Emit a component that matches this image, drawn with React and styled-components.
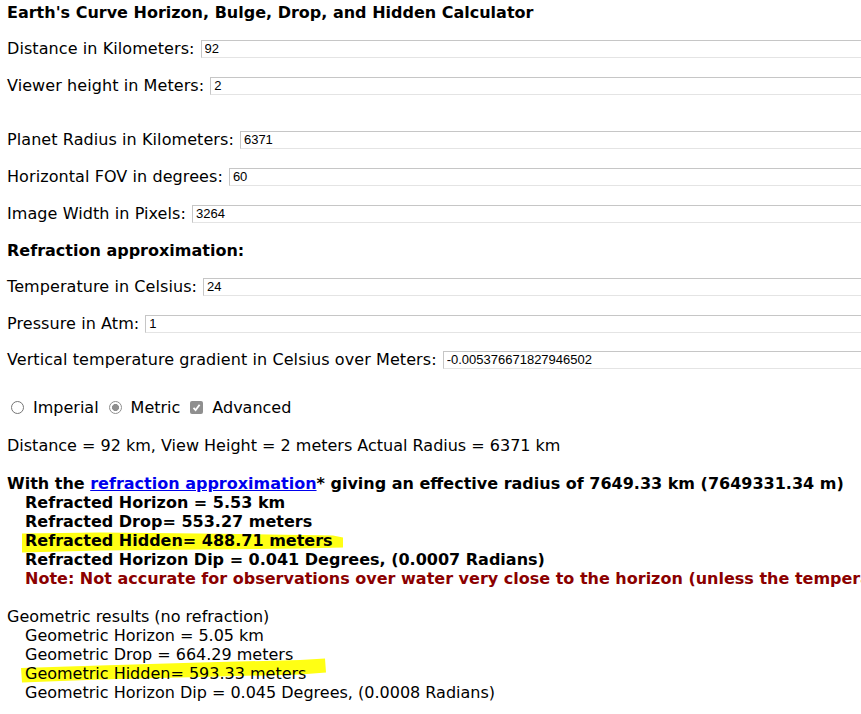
import styled, { createGlobalStyle } from 'styled-components';

const GlobalStyle = createGlobalStyle`
  html, body {
    margin: 0;
    padding: 0;
    background: #fff;
    overflow: hidden;
  }
  body {
    font-family: "DejaVu Sans", Verdana, sans-serif;
    font-size: 16px;
    color: #000;
  }
`;

const Page = styled.div`
  padding: 3px 0 0 7px;
  white-space: nowrap;
`;

const Title = styled.div`
  font-weight: bold;
  line-height: 20px;
`;

const Field = styled.div`
  display: flex;
  align-items: center;
  gap: 6px;
  height: 21px;
  margin-top: ${(props) => props.$gap}px;
  margin-right: -14px;
  letter-spacing: 0.08px;
`;

const Input = styled.input`
  flex: 1;
  min-width: 0;
  height: 18px;
  box-sizing: border-box;
  border: 1px solid;
  border-color: #c6c6c6 #e4e4e4 #e4e4e4 #c6c6c6;
  padding: 0 3px;
  font: 13px "Liberation Sans", Arial, sans-serif;
  letter-spacing: 0;
  color: #000;
  background: #fff;
  outline: none;
`;

const Heading = styled.div`
  font-weight: bold;
  line-height: 21px;
  margin-top: ${(props) => props.$gap}px;
`;

const Options = styled.div`
  display: flex;
  align-items: center;
  height: 21px;
  margin-top: 27px;
  padding-left: 4px;
`;

const Option = styled.label`
  display: flex;
  align-items: center;
  gap: 9px;
  margin-right: 10px;
`;

const Radio = styled.span`
  box-sizing: border-box;
  width: 13px;
  height: 13px;
  border-radius: 50%;
  border: 1px solid ${(props) => (props.$checked ? '#8f8f8f' : '#767676')};
  background: ${(props) =>
    props.$checked ? 'radial-gradient(circle, #8f8f8f 0 3.2px, #fff 3.8px)' : '#fff'};
`;

const Checkbox = styled.span`
  display: flex;
  align-items: center;
  justify-content: center;
  width: 13px;
  height: 13px;
  border-radius: 2px;
  background: #8f8f8f;
`;

const Text = styled.div`
  line-height: ${(props) => props.$lh || 19}px;
  margin-top: ${(props) => props.$gap || 0}px;
  padding-left: ${(props) => (props.$indent ? 18 : 0)}px;
  font-weight: ${(props) => (props.$bold ? 'bold' : 'normal')};
  color: ${(props) => props.$color || '#000'};
  position: relative;
`;

const Link = styled.a`
  color: #0000ee;
  text-decoration: underline;
`;

const Marker = styled.svg`
  position: absolute;
  left: 0;
  top: 0;
  overflow: visible;
  z-index: 0;
`;

const Label = styled.span`
  position: relative;
  z-index: 1;
`;

const Highlight = ({ points, children }) => (
  <>
    <Marker width="1" height="1">
      <polygon points={points} fill="#ffff14" />
    </Marker>
    <Label>{children}</Label>
  </>
);

const fields = [
  { label: 'Distance in Kilometers:', value: '92', gap: 15 },
  { label: 'Viewer height in Meters:', value: '2', gap: 16 },
  { label: 'Planet Radius in Kilometers:', value: '6371', gap: 33 },
  { label: 'Horizontal FOV in degrees:', value: '60', gap: 16 },
  { label: 'Image Width in Pixels:', value: '3264', gap: 16 },
];

const refraction = [
  { label: 'Temperature in Celsius:', value: '24', gap: 15 },
  { label: 'Pressure in Atm:', value: '1', gap: 16 },
  { label: 'Vertical temperature gradient in Celsius over Meters:', value: '-0.005376671827946502', gap: 15 },
];

const FieldRow = ({ label, value, gap }) => (
  <Field $gap={gap}>
    <span>{label}</span>
    <Input defaultValue={value} />
  </Field>
);

export default function App() {
  return (
    <Page>
      <GlobalStyle />
      <Title>Earth's Curve Horizon, Bulge, Drop, and Hidden Calculator</Title>
      {fields.map((f) => (
        <FieldRow key={f.label} {...f} />
      ))}
      <Heading $gap={16}>Refraction approximation:</Heading>
      {refraction.map((f) => (
        <FieldRow key={f.label} {...f} />
      ))}

      <Options>
        <Option>
          <Radio />
          Imperial
        </Option>
        <Option>
          <Radio $checked />
          Metric
        </Option>
        <Option>
          <Checkbox>
            <svg width="9" height="9" viewBox="0 0 9 9">
              <path d="M1.5 4.8 L3.6 7 L7.6 1.8" fill="none" stroke="#fff" strokeWidth="1.8" />
            </svg>
          </Checkbox>
          Advanced
        </Option>
      </Options>

      <Text $lh={21} $gap={17}>
        Distance = 92 km, View Height = 2 meters Actual Radius = 6371 km
      </Text>

      <Text $bold $gap={18}>
        With the <Link href="#">refraction approximation</Link>* giving an effective radius of 7649.33 km (7649331.34 m)
      </Text>
      <Text $bold $indent>Refracted Horizon = 5.53 km</Text>
      <Text $bold $indent>Refracted Drop= 553.27 meters</Text>
      <Text $bold $indent>
        <Highlight points="15,2.5 93,1.5 193,2.5 326,4.5 336,6.5 336,16.5 293,17.5 93,19.5 15,21.5">
          Refracted Hidden= 488.71 meters
        </Highlight>
      </Text>
      <Text $bold $indent>Refracted Horizon Dip = 0.041 Degrees, (0.0007 Radians)</Text>
      <Text $bold $indent $color="#8b0000">
        Note: Not accurate for observations over water very close to the horizon (unless the temperature gradient is known)
      </Text>

      <Text $gap={19}>Geometric results (no refraction)</Text>
      <Text $indent>Geometric Horizon = 5.05 km</Text>
      <Text $indent>Geometric Drop = 664.29 meters</Text>
      <Text $indent>
        <Highlight points="14,4 93,1.5 193,-1.5 293,-4 318,-5.5 319,8.5 293,10.5 193,13 93,15.5 15,18.5">
          Geometric Hidden= 593.33 meters
        </Highlight>
      </Text>
      <Text $indent>Geometric Horizon Dip = 0.045 Degrees, (0.0008 Radians)</Text>
    </Page>
  );
}
